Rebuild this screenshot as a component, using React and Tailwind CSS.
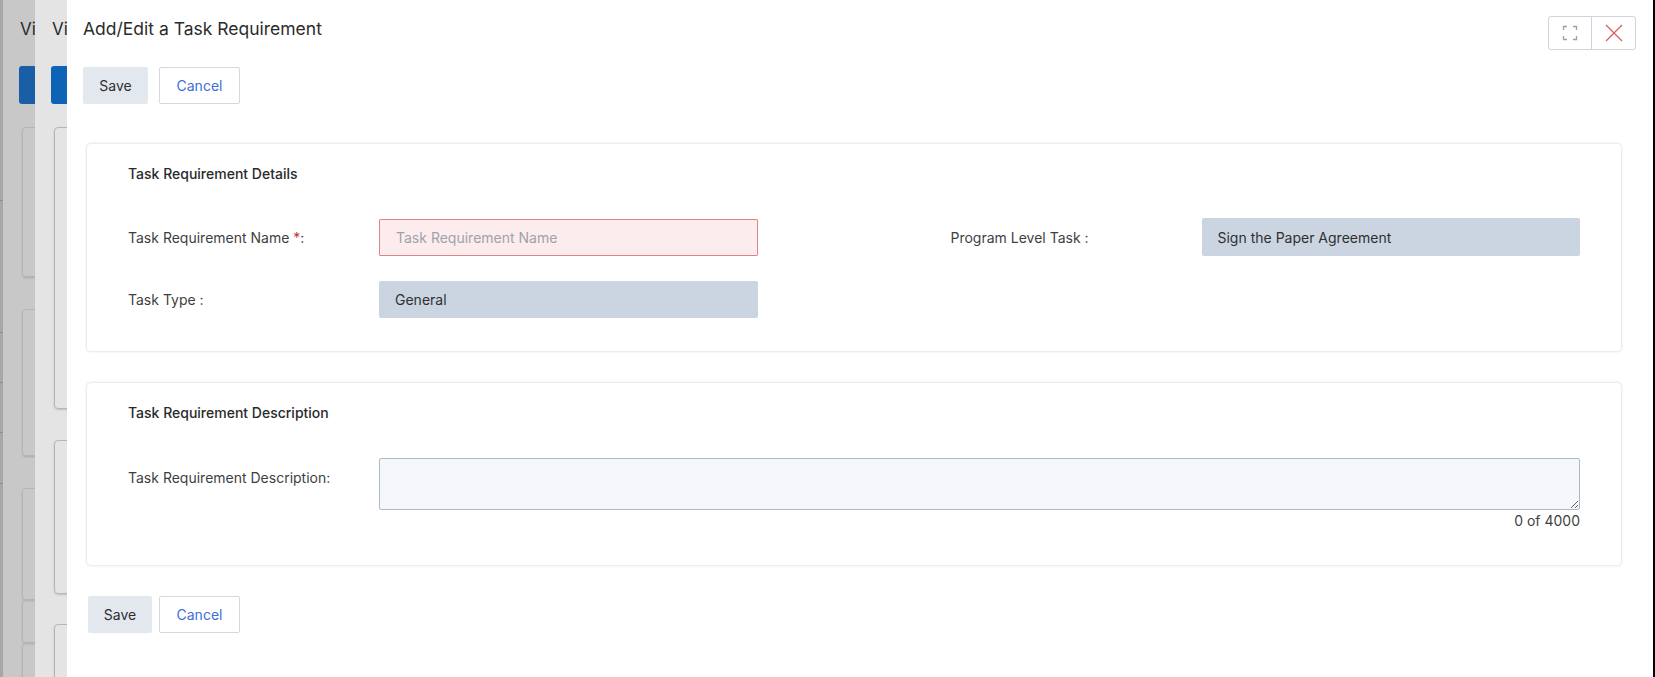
import React from "react";

const font = { fontFamily: "Inter, 'Noto Sans', sans-serif" };

function BackPanel({ bg, blue, cards }) {
  return (
    <div className={`relative w-[32px] shrink-0 overflow-hidden ${bg}`}>
      <div className="pt-[19px] pl-[17px] text-[17px] leading-5 text-[#2b2b2b] whitespace-nowrap">Vi</div>
      <div className={`ml-[16px] mt-[27px] h-[38px] w-[40px] rounded-[3px] ${blue}`} />
      {cards.map(([top, h], i) => (
        <div
          key={i}
          className="absolute left-[19px] w-[60px] rounded-[4px] border border-[#b5b5b5] shadow-[0_1px_2px_rgba(0,0,0,0.15)]"
          style={{ top, height: h }}
        />
      ))}
    </div>
  );
}

function Card({ title, children, className = "" }) {
  return (
    <div className={`rounded-[4px] bg-white shadow-[0_0_3px_rgba(0,0,0,0.22)] ${className}`}>
      <div className="text-[14px] font-medium text-[#2a2a2a]">{title}</div>
      {children}
    </div>
  );
}

function Field({ label, children }) {
  return (
    <div className="flex items-center">
      <div className="w-[251px] shrink-0 text-[14px] text-[#3f3f3f]">{label}</div>
      {children}
    </div>
  );
}

function Buttons({ saveW, gap }) {
  return (
    <div className={`flex ${gap}`}>
      <button className={`h-[37px] ${saveW} rounded-[2px] bg-[#e3e8ef] text-[14px] text-[#2f2f2f]`}>Save</button>
      <button className="h-[37px] w-[81px] rounded-[2px] border border-[#d4d9e0] bg-white text-[14px] text-[#3d6fd6]">
        Cancel
      </button>
    </div>
  );
}

export default function App() {
  return (
    <div className="flex h-[677px] w-[1655px] overflow-hidden bg-white" style={font}>
      <div className="relative w-[3px] shrink-0 overflow-hidden bg-[#a7a7a7]">
        {[200, 332, 382, 432, 483].map((t) => (
          <div key={t} className="absolute left-0 h-px w-full bg-[#8f8f8f]" style={{ top: t }} />
        ))}
      </div>
      <BackPanel
        bg="bg-[#c8c8c8]"
        blue="bg-[#1a5ea6]"
        cards={[
          [127, 150],
          [309, 147],
          [488, 112],
          [600, 43],
          [643, 60],
        ]}
      />
      <BackPanel
        bg="bg-[#e4e4e4]"
        blue="bg-[#0e63b6]"
        cards={[
          [127, 282],
          [440, 154],
          [624, 80],
        ]}
      />

      <div className="relative flex-1 pl-[16px] pr-[17px]">
        <div className="flex h-[58px] items-start justify-between">
          <h1 className="pt-[19px] text-[17.5px] leading-5 text-[#2b2b2b]">Add/Edit a Task Requirement</h1>
          <div className="mt-[16px] flex h-[34px] rounded-[3px] border border-[#cdd4dd]">
            <button className="flex w-[43px] items-center justify-center border-r border-[#cdd4dd]">
              <svg width="16" height="16" viewBox="0 0 16 16" fill="none" stroke="#9aa0a8" strokeWidth="1.3">
                <path d="M1.5 5V1.5H5M11 1.5h3.5V5M14.5 11v3.5H11M5 14.5H1.5V11" />
              </svg>
            </button>
            <button className="flex w-[43px] items-center justify-center">
              <svg width="18" height="18" viewBox="0 0 18 18" fill="none" stroke="#e05a5a" strokeWidth="1.2">
                <path d="M1 1l16 16M17 1L1 17" />
              </svg>
            </button>
          </div>
        </div>

        <div className="mt-[9px]">
          <Buttons saveW="w-[65px]" gap="gap-[11px]" />
        </div>

        <div className="ml-[4px] mr-[15px] mt-[40px] flex flex-col gap-[32px]">
          <Card title="Task Requirement Details" className="h-[207px] px-[41px] pt-[19px]">
            <div className="mt-[34px] grid grid-cols-2 gap-x-[193px] gap-y-[25px]">
              <Field
                label={
                  <>
                    Task Requirement Name <span className="text-[#c23934]">*</span>:
                  </>
                }
              >
                <input
                  placeholder="Task Requirement Name"
                  className="h-[37px] w-[379px] rounded-[1px] border border-[#e08585] bg-[#fdeced] px-[16px] text-[14px] text-[#333] placeholder:text-[#9ea3ab] outline-none"
                />
              </Field>
              <Field label="Program Level Task :">
                <div className="flex h-[38px] w-[380px] items-center rounded-[2px] bg-[#cbd5e1] px-[16px] text-[14px] text-[#2f2f2f]">
                  Sign the Paper Agreement
                </div>
              </Field>
              <Field label="Task Type :">
                <div className="flex h-[37px] w-[379px] items-center rounded-[2px] bg-[#cbd5e1] px-[16px] text-[14px] text-[#2f2f2f]">
                  General
                </div>
              </Field>
            </div>
          </Card>

          <Card title="Task Requirement Description" className="h-[182px] px-[41px] pt-[19px]">
            <div className="mt-[35px] flex items-start">
              <div className="w-[251px] shrink-0 pt-[9px] text-[14px] text-[#3f3f3f]">Task Requirement Description:</div>
              <div className="flex-1">
                <textarea className="block h-[52px] w-full resize-y rounded-[2px] border border-[#aeb9c7] bg-[#f5f7fa] px-3 py-2 text-[14px] outline-none" />
                <div className="mt-0 text-right text-[14px] text-[#3f3f3f]">0 of 4000</div>
              </div>
            </div>
          </Card>
        </div>

        <div className="ml-[5px] mt-[31px]">
          <Buttons saveW="w-[64px]" gap="gap-[7px]" />
        </div>
      </div>
      <div className="w-[2px] shrink-0 bg-black" />
    </div>
  );
}
